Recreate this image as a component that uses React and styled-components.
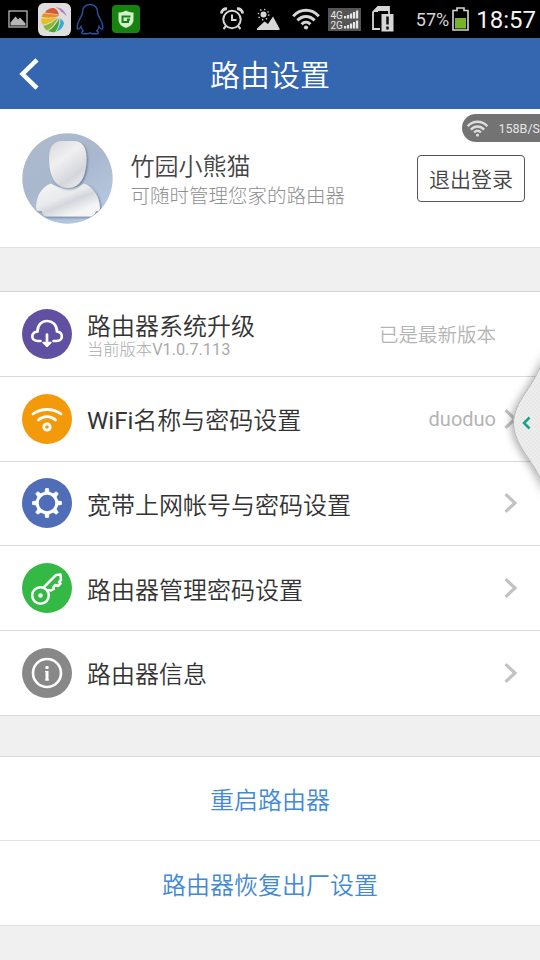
import React from "react";
import styled, { createGlobalStyle } from "styled-components";

const GlobalStyle = createGlobalStyle`
  * {
    box-sizing: border-box;
  }

  body {
    margin: 0;
    background: #f0f0f0;
    font-family: Roboto, "Noto Sans CJK SC", sans-serif;
    overflow: hidden;
  }

  h1, h2, h3, p {
    margin: 0;
    font-weight: inherit;
  }

  svg {
    display: block;
    flex: none;
  }
`;

const Screen = styled.main`
  position: relative;
  width: 540px;
  height: 960px;
  overflow: hidden;
  background: #f0f0f0;
`;

const StatusBar = styled.div`
  height: 38px;
  display: flex;
  justify-content: space-between;
  align-items: center;
  padding: 0 4px 0 8px;
  background: #000;
  color: #d6d6d6;
`;

const StatusGroup = styled.div`
  display: flex;
  align-items: center;
`;

const StatusItem = styled.div`
  margin-left: ${(props) => props.$before || 0}px;
`;

const Percent = styled.span`
  margin: 1px 3px 0 22px;
  font-size: 18px;
  line-height: 38px;
`;

const Clock = styled.span`
  margin: 1px 0 0 7px;
  color: #f2f2f2;
  font-size: 24px;
  line-height: 38px;
`;

const Header = styled.header`
  height: 71px;
  display: grid;
  grid-template-columns: 60px 1fr 60px;
  align-items: center;
  background: #3567b1;
  color: #fff;

  h1 {
    padding-top: 4px;
    font-size: 30px;
    line-height: 36px;
    text-align: center;
    font-weight: 350;
  }
`;

const BackButton = styled.button`
  padding: 0 0 0 19px;
  border: 0;
  background: none;
`;

const Profile = styled.section`
  height: 139px;
  display: flex;
  align-items: center;
  padding: 0 15px 0 22px;
  border-bottom: 1px solid #e2e2e2;
  background: #fff;
`;

const ProfileText = styled.div`
  flex: 1;
  margin-left: 17.5px;
  padding-top: 5px;

  h2 {
    color: #444;
    font-size: 24px;
    font-weight: 350;
    line-height: 31px;
  }

  p {
    color: #8f8f8f;
    font-size: 19.5px;
    font-weight: 300;
    line-height: 27px;
  }
`;

const LogoutButton = styled.button`
  width: 108px;
  height: 47px;
  padding: 0;
  border: 1px solid #555;
  border-radius: 4px;
  background: #fff;
  color: #444;
  font-family: inherit;
  font-size: 21px;
  font-weight: 350;
`;

const List = styled.section`
  margin-top: ${(props) => props.$gap}px;
  border-top: ${(props) => props.$line || "1px solid #dadada"};
  background: #fff;
`;

const Row = styled.div`
  height: 84.75px;
  display: flex;
  align-items: center;
  padding: 0 22px;
  border-bottom: 1px solid #dadada;
`;

const Badge = styled.div`
  flex: none;
  width: 50px;
  height: 50px;
  border-radius: 50%;
  background: ${(props) => props.$color};
`;

const RowText = styled.div`
  flex: 1;
  margin-left: 15px;
  padding-top: ${(props) => (props.$tall ? 7 : 5)}px;

  h3 {
    color: #333;
    font-size: 24px;
    font-weight: 350;
    line-height: 26px;
  }

  p {
    color: #aaa;
    font-size: 16.3px;
    font-weight: 300;
    line-height: 20px;
  }
`;

// Roboto drops to its light cut below 400, so Latin runs set their own weight
const Latin = styled.span`
  font-weight: 400;
`;

const RowValue = styled.span`
  margin-right: ${(props) => (props.$last ? "22px" : "8px")};
  color: #b4b4b4;
  font-size: ${(props) => (props.$last ? 19.5 : 20)}px;
  font-weight: ${(props) => (props.$last ? 350 : 400)};
`;

const Action = styled.button`
  width: 100%;
  height: 84.5px;
  display: block;
  padding: 0;
  border: 0;
  border-bottom: 1px solid #e0e0e0;
  background: #fff;
  color: #4389d3;
  font-family: inherit;
  font-size: 24px;
  font-weight: 350;
`;

const SpeedBadge = styled.div`
  position: absolute;
  top: 114px;
  right: 0;
  width: 78px;
  height: 28px;
  display: flex;
  align-items: center;
  justify-content: space-between;
  padding-left: 4px;
  border-radius: 14px 0 0 14px;
  background: #737373;
  color: #e6e6e6;
  font-size: 12.5px;
`;

const SideHandle = styled.div`
  position: absolute;
  top: 336px;
  right: 0;
`;

const WifiArcs = ({ width, height, color }) => (
  <svg width={width} height={height} viewBox="0 0 28 22" fill="none" stroke={color} strokeWidth="3">
    <path d="M1.2 8.2C8.5.3 19.5.3 26.8 8.2M5.4 12.4c5-5.3 12.2-5.3 17.2 0M9.6 16.2c2.7-2.7 6.1-2.7 8.8 0" />
    <circle cx="14" cy="19.5" r="2.1" fill={color} stroke="none" />
  </svg>
);

const Chevron = () => (
  <svg width="14" height="20" viewBox="0 0 14 20" fill="none" stroke="#c2c2c2" strokeWidth="3.2">
    <path d="M1.5 1.2 11 10l-9.5 8.8" />
  </svg>
);

const PictureIcon = () => (
  <svg width="20" height="18" viewBox="0 0 20 18">
    <rect x="1" y="1" width="18" height="16" fill="none" stroke="#aaa" strokeWidth="1.4" />
    <path d="M2.5 15.5v-3l5-6 2.5 3 2-2 5.5 6v2z" fill="#b5b5b5" />
  </svg>
);

const GalleryIcon = () => (
  <svg width="33" height="33" viewBox="0 0 33 33">
    <rect width="33" height="33" rx="6" fill="#dedede" />
    <path d="M7 9.500C9 6 13 4.500 16 5c2.500 1 4 3 5 6.500z" fill="#d65a35" />
    <path d="M3.500 14C4 12 5 10.800 6.500 10.200L21 12l-1 1.500C14 15 9 15 3.500 14z" fill="#ee8f1d" />
    <path d="M3.500 15.200c6 .8 10.500.3 15.500-1C15 18 10 21 4.500 21.800c-1.200-2-1.500-4.300-1-6.600z" fill="#e8bd1e" />
    <path d="M5.300 22.800C11 21.500 16 18.500 20 14.500 18 20 14 25 9 27.500c-1.800-1.200-3-2.800-3.700-4.700z" fill="#8cb53a" />
    <path d="M10.200 28c5-3 9-8 11-13 .5 5-1 10-4 14-2.500.5-5 0-7-1z" fill="#45a62f" />
    <path d="M18.300 28.700c3-4.200 4.200-8.500 4-13.200 2.200 1.500 3.500 3 3.700 5-1 4-4 7-7.700 8.200z" fill="#38a9d4" />
    <path d="M17.500 4.500c5-.5 9 2.500 11.500 9-2.500-2.500-4-4-6-4.800-1-2-3-3.500-5.500-4.200z" fill="#b57bc8" />
  </svg>
);

const PenguinIcon = () => (
  <svg width="28" height="32" viewBox="0 0 28 32" fill="none" stroke="#2356a8" strokeWidth="1.4">
    <path d="M14 1.500C9 1.500 6.500 5 6.500 9.500c0 2.500-1.500 4-2.700 6.500C2 19 .6 23 1.500 26c1.300.5 2.500-.8 3.500-2.500.3 1.800 1 3 2.200 4.300-2 1-2.200 3 .3 3H12l2-1 2 1h4.500c2.500 0 2.300-2 .3-3 1.200-1.300 1.900-2.500 2.200-4.300 1 1.700 2.200 3 3.500 2.500.9-3-.5-7-2.300-10-1.200-2.500-2.700-4-2.700-6.500 0-4.500-2.500-8-7.500-8z" />
  </svg>
);

const GuardIcon = () => (
  <svg width="28" height="28" viewBox="0 0 28 28">
    <rect width="28" height="28" rx="4" fill="#16830f" />
    <path d="M14 5.500c2.500 1.500 5 2 7.500 2v7c0 4-3 7-7.500 8.500C9.500 21.500 6.500 18.500 6.500 14.500v-7c2.500 0 5-.5 7.500-2z" fill="#d7efd0" />
    <path d="M18.500 11.500h-8V17H16v-2.500h2" fill="none" stroke="#16830f" strokeWidth="2" />
  </svg>
);

const AlarmIcon = () => (
  <svg width="24" height="24" viewBox="0 0 24 24" fill="none" stroke="#d6d6d6" strokeWidth="2">
    <circle cx="12" cy="12.500" r="8.700" />
    <path d="M12 7.500V13h4.500M6 19l-2.500 3M18 19l2.500 3" />
    <path d="M1.500 6.500C1.500 3.500 4 1.500 7 1.800M22.500 6.500c0-3-2.500-5-5.500-4.700" strokeWidth="2.800" />
  </svg>
);

const WeatherIcon = () => (
  <svg width="23" height="22" viewBox="0 0 23 22">
    <path d="M0 22v-1.500l7.500-7 3.500 2.500 5-7.500 6.500 12V22z" fill="#d6d6d6" />
    <circle cx="6.500" cy="6.500" r="3" fill="#d6d6d6" />
    <circle cx="6.500" cy="6.500" r="5.200" fill="none" stroke="#d6d6d6" strokeWidth="1.400" strokeDasharray="1.300 2.780" />
  </svg>
);

const SignalBars = ({ y }) => (
  <>
    {[2.5, 3.5, 5, 6.5, 8].map((h, i) => (
      <rect key={h} x={16 + i * 3} y={y - h} width="2.200" height={h} fill="#e6e6e6" />
    ))}
  </>
);

const SignalIcon = () => (
  <svg width="33" height="23" viewBox="0 0 33 23">
    <rect width="33" height="23" fill="#555" />
    <text x="2.500" y="10.500" fill="#e6e6e6" fontSize="10" fontFamily="Roboto">4G</text>
    <text x="2.500" y="20.500" fill="#e6e6e6" fontSize="10" fontFamily="Roboto">2G</text>
    <SignalBars y={10.5} />
    <SignalBars y={20.5} />
  </svg>
);

const SimAlertIcon = () => (
  <svg width="22" height="26" viewBox="0 0 22 26">
    <path d="M17 8V1H6L1 6v17h7" fill="none" stroke="#d6d6d6" strokeWidth="1.800" />
    <path d="M6 1v5H1zM6 1h11v4H6z" fill="#d6d6d6" />
    <rect x="9.500" y="8" width="12" height="17.500" fill="#d6d6d6" />
    <path d="M15.500 10.500v8M15.500 20.500v3" stroke="#111" strokeWidth="2.500" />
  </svg>
);

const BatteryIcon = () => (
  <svg width="17" height="24" viewBox="0 0 17 24">
    <path d="M1 3.500h4V1h7v2.500h4V23H1z" fill="none" stroke="#d6d6d6" strokeWidth="1.600" />
    <rect x="3" y="11" width="11" height="10.500" fill="#76b52b" />
  </svg>
);

const Avatar = () => (
  <svg width="91" height="91" viewBox="0 0 91 91">
    <defs>
      <linearGradient id="backdrop" x1="0" y1="0" x2=".6" y2="1">
        <stop offset="0" stopColor="#afbacb" />
        <stop offset=".55" stopColor="#a9b8ce" />
        <stop offset="1" stopColor="#b5c8e0" />
      </linearGradient>
      <linearGradient id="head" x1=".2" y1="0" x2=".8" y2="1">
        <stop offset="0" stopColor="#dcdde0" />
        <stop offset=".35" stopColor="#f0f0f1" />
        <stop offset=".75" stopColor="#d3d6db" />
        <stop offset="1" stopColor="#eee" />
      </linearGradient>
      <linearGradient id="torso" x1=".1" y1="0" x2=".9" y2="1">
        <stop offset="0" stopColor="#f4f4f4" />
        <stop offset=".4" stopColor="#e8eaec" />
        <stop offset=".55" stopColor="#d3d6dc" />
        <stop offset=".8" stopColor="#f5f5f6" />
      </linearGradient>
      <filter id="lift" x="-20%" y="-20%" width="150%" height="150%">
        <feDropShadow dx="1.200" dy="1.200" stdDeviation=".9" floodColor="#51698c" floodOpacity=".75" />
      </filter>
      <clipPath id="disc">
        <circle cx="45.500" cy="45.500" r="45.200" />
      </clipPath>
    </defs>
    <g clipPath="url(#disc)">
      <rect width="91" height="91" fill="url(#backdrop)" />
      <path
        d="M29 50.500c9 6 24 6 33 0C72 54 77.500 64 78 75c-.5 3.500-2 3.500-4 3-1 3.500-3 5.500-7 5.500H25c-3 0-5-2-5.500-5.500-3 .5-5 .5-5.500-3C14 64 19 54 29 50.500z"
        fill="url(#torso)"
        filter="url(#lift)"
      />
      <path
        d="M40 8h11.500C60 8 64.500 14 64.500 25c0 18-6 30-18.700 30S27 43 27 25C27 14 31.500 8 40 8z"
        fill="url(#head)"
        filter="url(#lift)"
      />
    </g>
  </svg>
);

const CloudGlyph = () => (
  <svg width="50" height="50" viewBox="0 0 50 50" fill="none" stroke="#fff" strokeWidth="2.700" strokeLinecap="round">
    <path d="M18.500 32h-2.500c-7.500 0-7.500-9-.5-9.700C15.500 15.500 20 12 25 12s9.800 3.500 10 10.300c6.500.7 6.500 9.700-.5 9.700h-3" />
    <path d="M25 25.500v9" />
    <path d="M21 33.500h8L25 37.500z" fill="#fff" strokeWidth="1.500" strokeLinejoin="round" />
  </svg>
);

const WifiGlyph = () => (
  <svg width="50" height="50" viewBox="0 0 50 50" fill="none" stroke="#fff" strokeWidth="2.800" strokeLinecap="round">
    <path d="M11 20c8-6 20-6 28 0M16.500 26c5-4.500 12-4.500 17 0" />
    <circle cx="25" cy="33" r="3.200" />
  </svg>
);

const GearGlyph = () => (
  <svg width="50" height="50" viewBox="0 0 50 50" fill="none" stroke="#fff">
    {[0, 45, 90, 135, 180, 225, 270, 315].map((angle) => (
      <path key={angle} d="M22.800 15l.8-4.500h2.800l.8 4.500z" fill="#fff" strokeWidth=".8" transform={`rotate(${angle} 25 25)`} />
    ))}
    <circle cx="25" cy="25" r="9.800" strokeWidth="3" />
  </svg>
);

const KeyGlyph = () => (
  <svg width="50" height="50" viewBox="0 0 50 50" fill="none" stroke="#fff" strokeWidth="2.500" strokeLinejoin="round">
    <circle cx="18.500" cy="32.500" r="8.300" />
    <circle cx="18.500" cy="32.500" r="2.200" fill="#fff" stroke="none" />
    <path d="M21.500 24.500 34 12l4.500-.5.500 5.500-2 2 1.500 1.500-2.500 2.500-2.500-1-2 2 .3 2-2.800 1.500-2-.5-2 2.500" />
  </svg>
);

const InfoGlyph = () => (
  <svg width="50" height="50" viewBox="0 0 50 50" fill="none" stroke="#fff">
    <circle cx="25" cy="25" r="14" strokeWidth="2.600" />
    <path d="M25 18v3M25 23v9.500" strokeWidth="3" />
    <path d="M23 23.500h2M23 32h4" strokeWidth="1.200" />
  </svg>
);

const settings = [
  {
    title: "路由器系统升级",
    note: <>当前版本<Latin>V1.0.7.113</Latin></>,
    value: "已是最新版本",
    color: "#6050a2",
    glyph: <CloudGlyph />,
  },
  { latin: "WiFi", title: "名称与密码设置", value: "duoduo", color: "#f39a0b", glyph: <WifiGlyph />, link: true },
  { title: "宽带上网帐号与密码设置", color: "#506db8", glyph: <GearGlyph />, link: true },
  { title: "路由器管理密码设置", color: "#33b944", glyph: <KeyGlyph />, link: true },
  { title: "路由器信息", color: "#888", glyph: <InfoGlyph />, link: true },
];

const App = () => {
  return (
    <>
      <GlobalStyle />
      <Screen>
        <StatusBar>
          <StatusGroup>
            <StatusItem><PictureIcon /></StatusItem>
            <StatusItem $before={9.5}><GalleryIcon /></StatusItem>
            <StatusItem $before={5.5}><PenguinIcon /></StatusItem>
            <StatusItem $before={8}><GuardIcon /></StatusItem>
          </StatusGroup>
          <StatusGroup>
            <StatusItem><AlarmIcon /></StatusItem>
            <StatusItem $before={13}><WeatherIcon /></StatusItem>
            <StatusItem $before={12}><WifiArcs width={28} height={22} color="#d6d6d6" /></StatusItem>
            <StatusItem $before={7.5}><SignalIcon /></StatusItem>
            <StatusItem $before={11}><SimAlertIcon /></StatusItem>
            <Percent>57%</Percent>
            <BatteryIcon />
            <Clock>18:57</Clock>
          </StatusGroup>
        </StatusBar>

        <Header>
          <BackButton aria-label="返回">
            <svg width="22" height="32" viewBox="0 0 22 32" fill="none" stroke="#fff" strokeWidth="4.500">
              <path d="M18 1.800 3.500 16 18 30.200" />
            </svg>
          </BackButton>
          <h1>路由设置</h1>
        </Header>

        <Profile>
          <Avatar />
          <ProfileText>
            <h2>竹园小熊猫</h2>
            <p>可随时管理您家的路由器</p>
          </ProfileText>
          <LogoutButton>退出登录</LogoutButton>
        </Profile>

        <List $gap={43} $line="1.5px solid #d2d2d8">
          {settings.map((item) => (
            <Row key={item.title}>
              <Badge $color={item.color}>{item.glyph}</Badge>
              <RowText $tall={item.note}>
                <h3>
                  {item.latin && <Latin>{item.latin}</Latin>}
                  {item.title}
                </h3>
                {item.note && <p>{item.note}</p>}
              </RowText>
              {item.value && <RowValue $last={!item.link}>{item.value}</RowValue>}
              {item.link && <Chevron />}
            </Row>
          ))}
        </List>

        <List $gap={40}>
          <Action>重启路由器</Action>
          <Action>路由器恢复出厂设置</Action>
        </List>

        <SpeedBadge>
          <WifiArcs width={23} height={17} color="#dcdcdc" />
          <span>158B/S</span>
        </SpeedBadge>

        <SideHandle>
          <svg width="52" height="174" viewBox="0 0 52 174">
            <defs>
              <filter id="handleShadow" x="-60%" y="-20%" width="220%" height="140%">
                <feDropShadow dx="-1" dy="1" stdDeviation="5" floodColor="#000" floodOpacity=".4" />
              </filter>
              <pattern id="weave" width="4" height="4" patternUnits="userSpaceOnUse">
                <rect width="4" height="4" fill="#eee" />
                <path d="M0 0h2v2H0zM2 2h2v2H2z" fill="#e7e7e7" />
              </pattern>
            </defs>
            <path
              d="M58 18C51 36 44 47 38 56 30 68 25.500 77 25.500 87S30 107 38 119c7 10 14 20 20 38z"
              fill="url(#weave)"
              stroke="#aaa"
              strokeWidth=".8"
              filter="url(#handleShadow)"
            />
            <path d="M41.500 81.500l-5.500 5.500 5.500 5.500" fill="none" stroke="#14a583" strokeWidth="2.500" />
          </svg>
        </SideHandle>
      </Screen>
    </>
  );
};

export default App;
